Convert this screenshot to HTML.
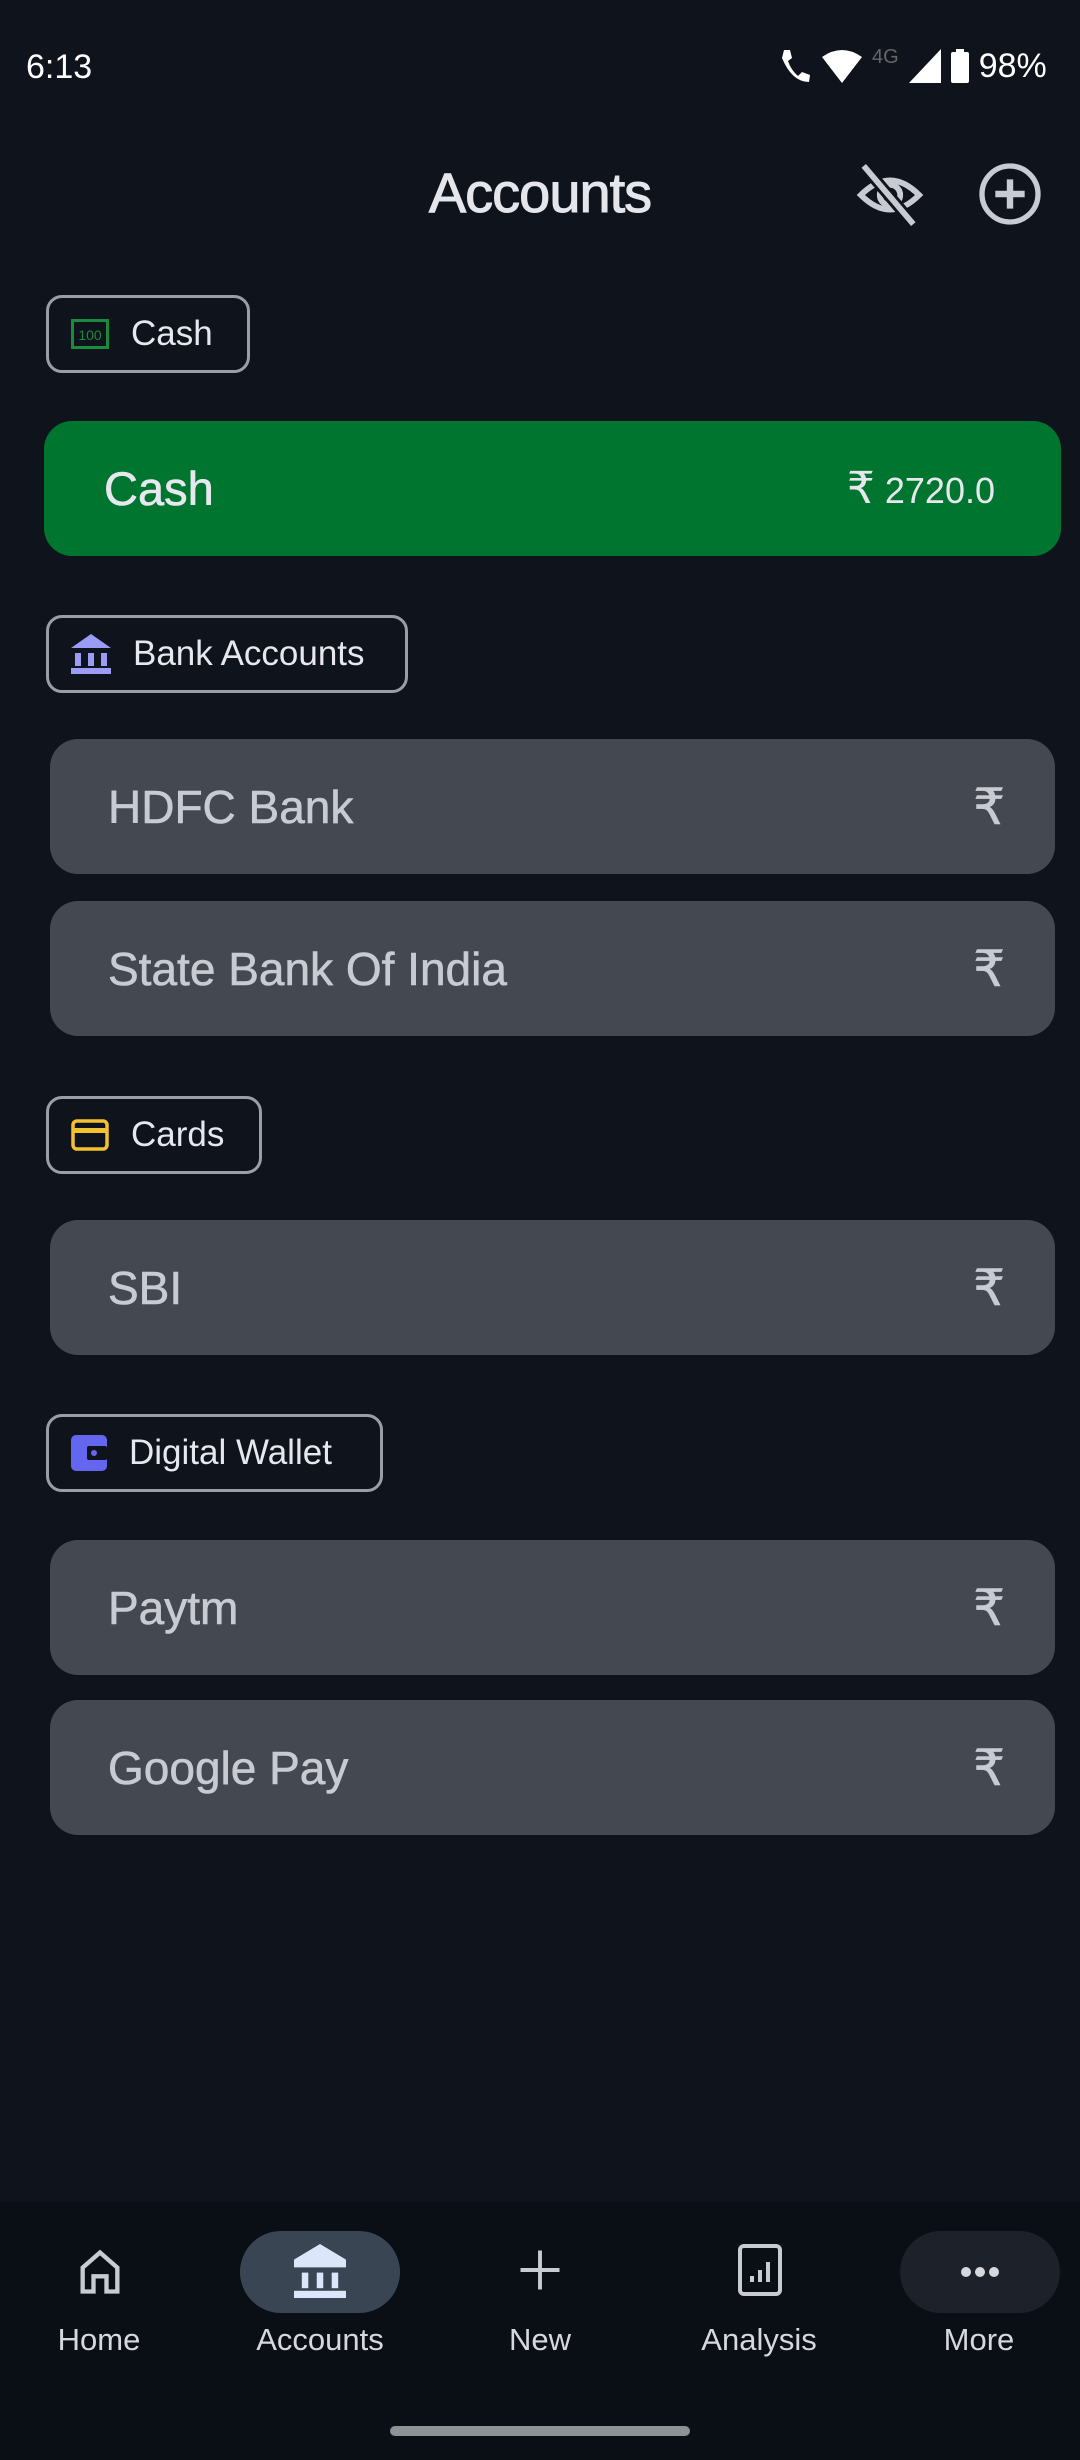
<!DOCTYPE html>
<html><head><meta charset="utf-8"><style>
*{margin:0;padding:0;box-sizing:border-box}
body{width:1080px;height:2460px;background:#0f131c;font-family:"Liberation Sans",sans-serif;color:#e2e4ea;position:relative;overflow:hidden}
.a{position:absolute}
.chip{position:absolute;left:46px;height:78px;border:3px solid #9a9ea6;border-radius:16px;display:flex;align-items:center;padding-left:22px;font-size:35px;color:#e6e8ee}
.chip svg{margin-right:22px}
.card{position:absolute;left:50px;width:1005px;height:135px;background:#444851;border-radius:28px;display:flex;align-items:center;justify-content:space-between;padding:0 50px 0 58px;font-size:46px;color:#c8cbd1;-webkit-text-stroke:0.6px #c8cbd1}
.rs{font-family:"DejaVu Sans",sans-serif;font-size:50px;color:#c8cbd1}
.nav{position:absolute;top:2202px;left:0;width:1080px;height:258px;background:#0a0f16}
.ni{position:absolute;top:2322px;width:216px;text-align:center;font-size:31px;color:#d6d8de}
</style></head><body>
<div class="a" style="left:26px;top:48px;font-size:34px;color:#fff">6:13</div>
<div class="a" style="left:778px;top:46px;display:flex;align-items:center;gap:10px;color:#fff;font-size:34px">
<svg width="34" height="40" viewBox="0 0 34 40"><path d="M6 4 L12 4 L14 12 L10 15 Q13 24 20 30 L24 26 L32 29 L31 36 Q14 36 4 12 Z" fill="#fff"/></svg>
<svg width="40" height="34" viewBox="0 0 40 34"><path d="M0 8 Q20 -6 40 8 L20 34 Z" fill="#fff"/></svg>
<span style="font-size:20px;color:#666;align-self:flex-start">4G</span>
<svg width="32" height="34" viewBox="0 0 32 34"><path d="M32 0 L32 34 L0 34 Z" fill="#fff"/></svg>
<svg width="18" height="34" viewBox="0 0 18 34"><rect x="0" y="3" width="18" height="31" rx="2" fill="#fff"/><rect x="5" y="0" width="8" height="4" fill="#fff"/></svg>
<span>98%</span></div>

<div class="a" style="left:0;width:1080px;top:160px;text-align:center;font-size:56px;color:#e4e6ec;letter-spacing:-1px;-webkit-text-stroke:1px #e4e6ec">Accounts</div>
<svg class="a" style="left:855px;top:160px" width="70" height="70" viewBox="0 0 24 24" fill="none" stroke="#c8cbd1" stroke-width="2"><path d="M2 12 Q12 2 22 12 Q12 22 2 12Z"/><circle cx="12" cy="12" r="3.5"/><path d="M3 2 L20 22" stroke="#0f131c" stroke-width="4"/><path d="M3 2 L20 22"/></svg>
<svg class="a" style="left:978px;top:162px" width="64" height="64" viewBox="0 0 24 24" fill="none" stroke="#c8cbd1" stroke-width="2"><circle cx="12" cy="12" r="10.5"/><path d="M12 6.5v11M6.5 12h11" stroke-width="2.4"/></svg>

<div class="chip" style="top:295px;width:204px"><svg width="38" height="30" viewBox="0 0 38 30"><rect x="1.5" y="1.5" width="35" height="27" fill="none" stroke="#1a8a3c" stroke-width="3"/><text x="19" y="21" font-size="14" text-anchor="middle" fill="#1a8a3c" font-family="Liberation Sans">100</text></svg>Cash</div>
<div class="card" style="left:44px;top:421px;width:1017px;height:135px;background:#00752f;color:#e6e8ee;padding:0 66px 0 60px;-webkit-text-stroke:0.6px #e6e8ee"><span style="font-size:47px">Cash</span><span style="font-size:36px;-webkit-text-stroke:0"><span class="rs" style="color:#e6e8ee;font-size:44px">₹</span> 2720.0</span></div>

<div class="chip" style="top:615px;width:362px"><svg width="40" height="40" viewBox="0 0 40 40" fill="#9b9cf5"><path d="M20 0 L40 14 L0 14Z"/><rect x="4" y="19" width="6" height="13"/><rect x="17" y="19" width="6" height="13"/><rect x="30" y="19" width="6" height="13"/><rect x="0" y="34" width="40" height="6"/></svg>Bank Accounts</div>
<div class="card" style="top:739px"><span>HDFC Bank</span><span class="rs">₹</span></div>
<div class="card" style="top:901px"><span>State Bank Of India</span><span class="rs">₹</span></div>

<div class="chip" style="top:1096px;width:216px"><svg width="38" height="32" viewBox="0 0 38 32"><rect x="2" y="2" width="34" height="28" rx="4" fill="none" stroke="#f2c230" stroke-width="3.5"/><rect x="2" y="9" width="34" height="5" fill="#f2c230"/></svg>Cards</div>
<div class="card" style="top:1220px"><span>SBI</span><span class="rs">₹</span></div>

<div class="chip" style="top:1414px;width:337px"><svg width="36" height="36" viewBox="0 0 36 36"><rect x="0" y="0" width="36" height="36" rx="5" fill="#6466f0"/><rect x="16" y="11" width="20" height="14" rx="2" fill="#0f131c"/><circle cx="23" cy="18" r="3" fill="#6466f0"/></svg>Digital Wallet</div>
<div class="card" style="top:1540px"><span>Paytm</span><span class="rs">₹</span></div>
<div class="card" style="top:1700px"><span>Google Pay</span><span class="rs">₹</span></div>

<div class="nav"></div>
<div class="a" style="left:240px;top:2231px;width:160px;height:82px;border-radius:41px;background:#3a4554"></div>
<div class="a" style="left:900px;top:2231px;width:160px;height:82px;border-radius:41px;background:#1d222a"></div>
<svg class="a" style="left:74px;top:2246px" width="52" height="52" viewBox="0 0 24 24" fill="none" stroke="#c8cbd1" stroke-width="2"><path d="M4 21V10L12 3L20 10V21H15V14H9V21Z"/></svg>
<svg class="a" style="left:294px;top:2242px" width="52" height="56" viewBox="0 0 40 40" fill="#dbe6fa"><path d="M20 0 L40 12 V18 H0 V12Z"/><rect x="6" y="22" width="5" height="12"/><rect x="17.5" y="22" width="5" height="12"/><rect x="29" y="22" width="5" height="12"/><rect x="0" y="36" width="40" height="6"/></svg>
<svg class="a" style="left:514px;top:2244px" width="52" height="52" viewBox="0 0 24 24" stroke="#c8cbd1" stroke-width="1.8"><path d="M12 3v18M3 12h18"/></svg>
<svg class="a" style="left:736px;top:2242px" width="48" height="56" viewBox="0 0 24 28" fill="none" stroke="#c8cbd1" stroke-width="2"><rect x="2" y="2" width="20" height="24" rx="2"/><path d="M8 20v-3M12 20v-6M16 20v-10" stroke-width="2"/></svg>
<svg class="a" style="left:958px;top:2260px" width="44" height="24" viewBox="0 0 44 24" fill="#d6d8de"><circle cx="8" cy="12" r="5"/><circle cx="22" cy="12" r="5"/><circle cx="36" cy="12" r="5"/></svg>
<div class="ni" style="left:-9px">Home</div>
<div class="ni" style="left:212px">Accounts</div>
<div class="ni" style="left:432px">New</div>
<div class="ni" style="left:651px">Analysis</div>
<div class="ni" style="left:871px">More</div>
<div class="a" style="left:390px;top:2426px;width:300px;height:10px;border-radius:5px;background:#8e9294"></div>
</body></html>
